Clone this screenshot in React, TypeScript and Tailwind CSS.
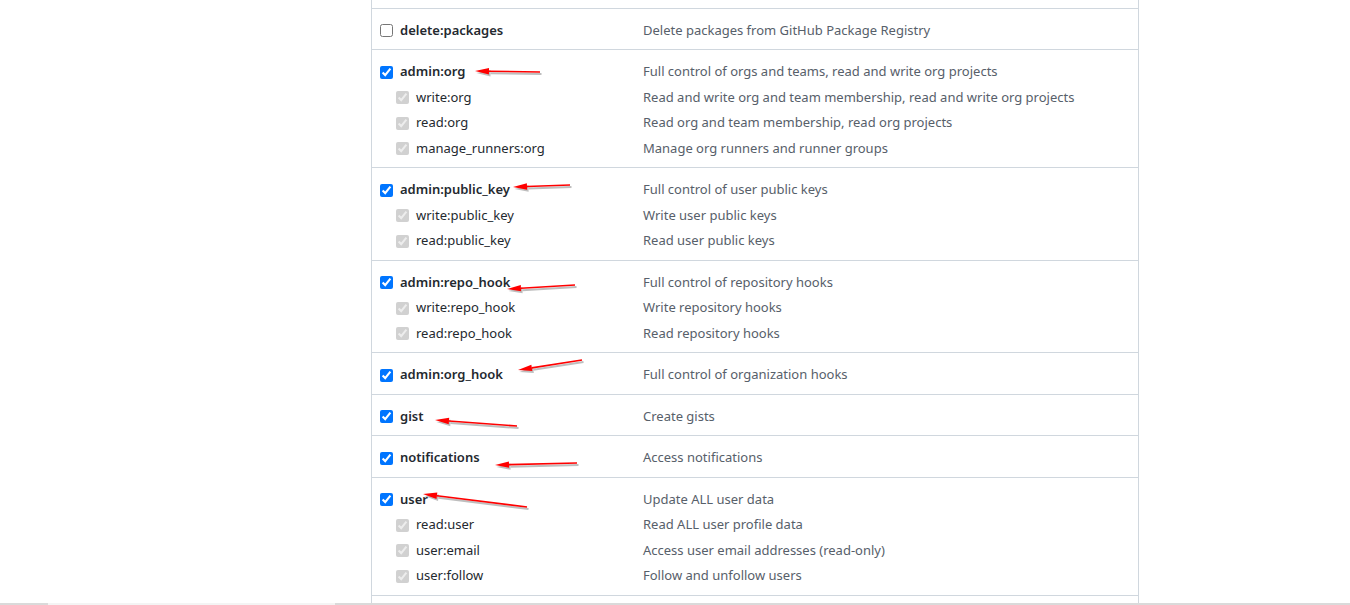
import React from 'react';

type Scope = {
  name: string;
  desc: string;
  checked: boolean;
  children?: { name: string; desc: string }[];
};

const scopes: Scope[] = [
  { name: 'delete:packages', desc: 'Delete packages from GitHub Package Registry', checked: false },
  {
    name: 'admin:org',
    desc: 'Full control of orgs and teams, read and write org projects',
    checked: true,
    children: [
      { name: 'write:org', desc: 'Read and write org and team membership, read and write org projects' },
      { name: 'read:org', desc: 'Read org and team membership, read org projects' },
      { name: 'manage_runners:org', desc: 'Manage org runners and runner groups' },
    ],
  },
  {
    name: 'admin:public_key',
    desc: 'Full control of user public keys',
    checked: true,
    children: [
      { name: 'write:public_key', desc: 'Write user public keys' },
      { name: 'read:public_key', desc: 'Read user public keys' },
    ],
  },
  {
    name: 'admin:repo_hook',
    desc: 'Full control of repository hooks',
    checked: true,
    children: [
      { name: 'write:repo_hook', desc: 'Write repository hooks' },
      { name: 'read:repo_hook', desc: 'Read repository hooks' },
    ],
  },
  { name: 'admin:org_hook', desc: 'Full control of organization hooks', checked: true },
  { name: 'gist', desc: 'Create gists', checked: true },
  { name: 'notifications', desc: 'Access notifications', checked: true },
  {
    name: 'user',
    desc: 'Update ALL user data',
    checked: true,
    children: [
      { name: 'read:user', desc: 'Read ALL user profile data' },
      { name: 'user:email', desc: 'Access user email addresses (read-only)' },
      { name: 'user:follow', desc: 'Follow and unfollow users' },
    ],
  },
];

// red annotation arrows: [tailX, tailY, headX, headY]
const arrows: [number, number, number, number][] = [
  [540, 72, 475, 71],
  [570, 185, 513, 187],
  [575, 285, 507, 289],
  [582, 360, 518, 370],
  [517, 426, 435, 420],
  [577, 463, 495, 465],
  [527, 507, 423, 494],
];

const Arrow = ({ a }: { a: [number, number, number, number] }) => {
  const [tx, ty, hx, hy] = a;
  const dx = hx - tx;
  const dy = hy - ty;
  const len = Math.sqrt(dx * dx + dy * dy);
  const ux = dx / len;
  const uy = dy / len;
  const bx = hx - ux * 14;
  const by = hy - uy * 14;
  const px = -uy * 3.2;
  const py = ux * 3.2;
  const head = `${hx},${hy} ${bx + px},${by + py} ${bx - px},${by - py}`;
  return (
    <g>
      <g transform="translate(1.5,2)" opacity="0.25">
        <line x1={tx} y1={ty} x2={bx} y2={by} stroke="#000" strokeWidth="2" />
        <polygon points={head} fill="#000" />
      </g>
      <line x1={tx} y1={ty} x2={bx} y2={by} stroke="#f00" strokeWidth="1.6" />
      <polygon points={head} fill="#f00" />
    </g>
  );
};

const App = () => {
  return (
    <div
      className="relative h-[605px] w-[1350px] overflow-hidden bg-white flex flex-col"
      style={{ fontFamily: '"Noto Sans", "Open Sans", sans-serif' }}
    >
      <div className="flex-1 overflow-hidden">
        <div className="ml-[371px] w-[768px] border-x border-[#d0d7de] text-[13px]">
          <div className="h-[8.5px] border-b border-[#d0d7de]" />
          {scopes.map((s) => (
            <div key={s.name} className="border-b border-[#d0d7de] pl-[8px] pt-[11.5px] pb-[8px]">
              <div className="flex h-[21px] items-center">
                <div className="flex w-[263px] items-center gap-[7px]">
                  <input type="checkbox" readOnly checked={s.checked} className="h-[13px] w-[13px]" />
                  <span className="font-semibold text-[#24292f]">{s.name}</span>
                </div>
                <span className="text-[#57606a]">{s.desc}</span>
              </div>
              {s.children?.map((c) => (
                <div key={c.name} className="mt-[4.5px] flex h-[21px] items-center">
                  <div className="flex w-[263px] items-center gap-[7px] pl-[16px]">
                    <input type="checkbox" readOnly checked disabled className="h-[13px] w-[13px]" />
                    <span className="text-[#24292f]">{c.name}</span>
                  </div>
                  <span className="text-[#57606a]">{c.desc}</span>
                </div>
              ))}
            </div>
          ))}
          <div className="h-[20px]" />
        </div>
      </div>
      <div className="flex h-[2px] bg-[#dadada]">
        <div className="ml-[48px] w-[287px] bg-[#f4f4f4]" />
      </div>
      <svg className="pointer-events-none absolute left-0 top-0" width="1350" height="605">
        {arrows.map((a, i) => (
          <Arrow key={i} a={a} />
        ))}
      </svg>
    </div>
  );
};

export default App;
